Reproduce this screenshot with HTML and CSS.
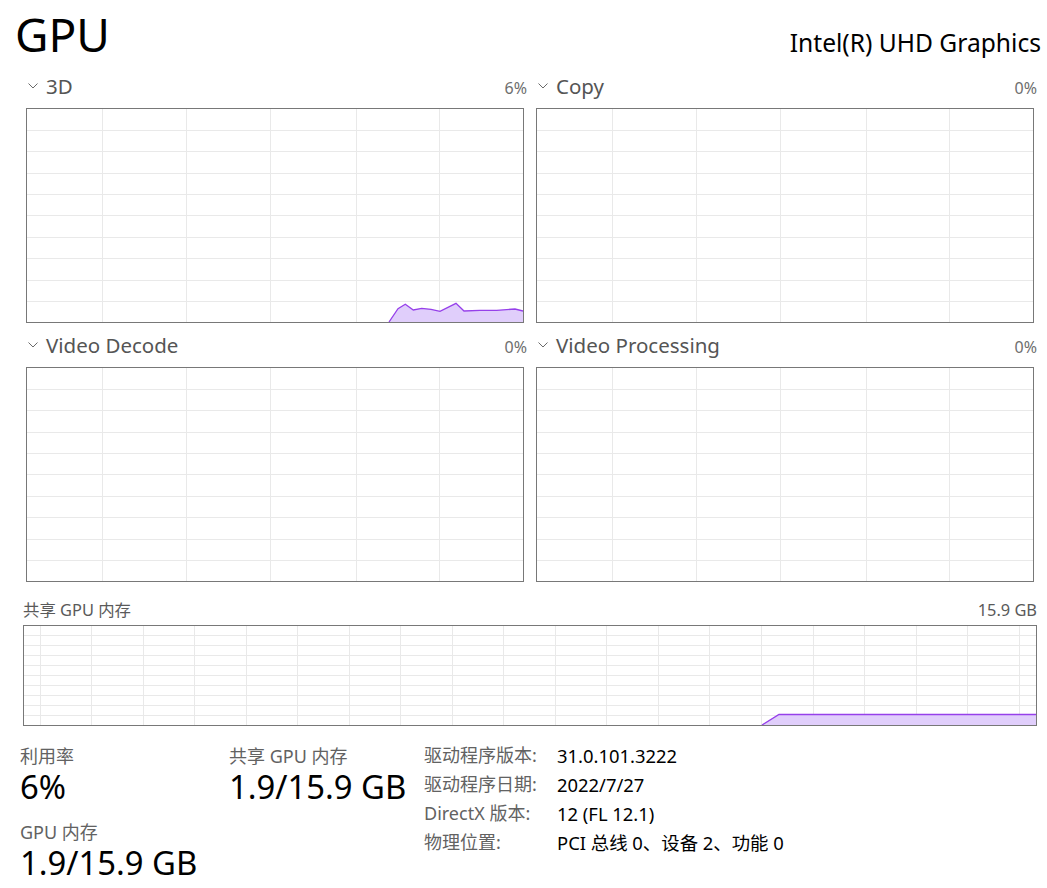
FILE: index.html
```html
<!DOCTYPE html>
<html lang="zh-CN">
<head>
<meta charset="utf-8">
<title>GPU</title>
<link rel="stylesheet" href="styles.css">
</head>
<body>
<div class="page">
  <header class="head">
    <h1 class="title">GPU</h1>
    <div class="device">Intel(R) UHD Graphics</div>
  </header>

  <div class="charts">
    <section class="chart">
      <div class="chart-head">
        <svg class="chev" width="10" height="6" viewBox="0 0 10 6"><polyline points="0.5,0.5 5,5 9.5,0.5"/></svg>
        <span class="chart-name">3D</span>
        <span class="chart-pct">6%</span>
      </div>
      <div class="graph">
        <svg class="plot" width="496" height="213" viewBox="0 0 496 213">
          <path class="grid" d="M0 21.5H496M0 42.5H496M0 64.5H496M0 85.5H496M0 106.5H496M0 128.5H496M0 149.5H496M0 171.5H496M0 192.5H496M75.5 0V213M159.5 0V213M243.5 0V213M329.5 0V213M412.5 0V213"/>
          <polygon class="fill" points="362,213 371,199.7 378.3,195.3 386.3,201 394.7,199.3 404,200.3 413,202.3 429,194.3 437,202 453,201.3 469.7,201.3 488,200 496,202 496,213"/>
          <polyline class="line" points="362,213 371,199.7 378.3,195.3 386.3,201 394.7,199.3 404,200.3 413,202.3 429,194.3 437,202 453,201.3 469.7,201.3 488,200 496,202"/>
        </svg>
      </div>
    </section>

    <section class="chart">
      <div class="chart-head">
        <svg class="chev" width="10" height="6" viewBox="0 0 10 6"><polyline points="0.5,0.5 5,5 9.5,0.5"/></svg>
        <span class="chart-name">Copy</span>
        <span class="chart-pct">0%</span>
      </div>
      <div class="graph">
        <svg class="plot" width="496" height="213" viewBox="0 0 496 213">
          <path class="grid" d="M0 21.5H496M0 42.5H496M0 64.5H496M0 85.5H496M0 106.5H496M0 128.5H496M0 149.5H496M0 171.5H496M0 192.5H496M75.5 0V213M159.5 0V213M243.5 0V213M329.5 0V213M412.5 0V213"/>
        </svg>
      </div>
    </section>

    <section class="chart">
      <div class="chart-head">
        <svg class="chev" width="10" height="6" viewBox="0 0 10 6"><polyline points="0.5,0.5 5,5 9.5,0.5"/></svg>
        <span class="chart-name">Video Decode</span>
        <span class="chart-pct">0%</span>
      </div>
      <div class="graph">
        <svg class="plot" width="496" height="213" viewBox="0 0 496 213">
          <path class="grid" d="M0 21.5H496M0 42.5H496M0 64.5H496M0 85.5H496M0 106.5H496M0 128.5H496M0 149.5H496M0 171.5H496M0 192.5H496M75.5 0V213M159.5 0V213M243.5 0V213M329.5 0V213M412.5 0V213"/>
        </svg>
      </div>
    </section>

    <section class="chart">
      <div class="chart-head">
        <svg class="chev" width="10" height="6" viewBox="0 0 10 6"><polyline points="0.5,0.5 5,5 9.5,0.5"/></svg>
        <span class="chart-name">Video Processing</span>
        <span class="chart-pct">0%</span>
      </div>
      <div class="graph">
        <svg class="plot" width="496" height="213" viewBox="0 0 496 213">
          <path class="grid" d="M0 21.5H496M0 42.5H496M0 64.5H496M0 85.5H496M0 106.5H496M0 128.5H496M0 149.5H496M0 171.5H496M0 192.5H496M75.5 0V213M159.5 0V213M243.5 0V213M329.5 0V213M412.5 0V213"/>
        </svg>
      </div>
    </section>
  </div>

  <section class="shared">
    <div class="shared-head">
      <span>共享 GPU 内存</span>
      <span>15.9 GB</span>
    </div>
    <div class="shared-graph">
      <svg class="plot" width="1012" height="99" viewBox="0 0 1012 99">
        <path class="grid" d="M0 9.5H1012M0 19.5H1012M0 29.5H1012M0 39.5H1012M0 49.5H1012M0 59.5H1012M0 69.5H1012M0 79.5H1012M0 89.5H1012M16.5 0V99M67.5 0V99M119.5 0V99M170.5 0V99M222.5 0V99M273.5 0V99M325.5 0V99M376.5 0V99M428.5 0V99M479.5 0V99M531.5 0V99M582.5 0V99M634.5 0V99M685.5 0V99M737.5 0V99M789.5 0V99M840.5 0V99M892.5 0V99M943.5 0V99M995.5 0V99"/>
        <polygon class="fill" points="738,99 755,88 1012,88 1012,99"/>
        <polyline class="line" points="738,99 755,88.5 1012,88.5"/>
      </svg>
    </div>
  </section>

  <div class="stats">
    <div class="stat-col stat-col-1">
      <div class="stat-label">利用率</div>
      <div class="stat-value">6%</div>
      <div class="stat-label stat-gap">GPU 内存</div>
      <div class="stat-value">1.9/15.9 GB</div>
    </div>
    <div class="stat-col stat-col-2">
      <div class="stat-label">共享 GPU 内存</div>
      <div class="stat-value">1.9/15.9 GB</div>
    </div>
    <dl class="info">
      <dt>驱动程序版本:</dt><dd>31.0.101.3222</dd>
      <dt>驱动程序日期:</dt><dd>2022/7/27</dd>
      <dt>DirectX 版本:</dt><dd>12 (FL 12.1)</dd>
      <dt>物理位置:</dt><dd>PCI 总线 0、设备 2、功能 0</dd>
    </dl>
  </div>
</div>
</body>
</html>
```
FILE: styles.css
```css
html, body {
  margin: 0;
  padding: 0;
  background: #ffffff;
}

body {
  font-family: "Noto Sans", "Noto Sans CJK SC", sans-serif;
  color: #000000;
}

.page {
  width: 1047px;
}

/* header */
.head {
  display: flex;
  align-items: baseline;
  justify-content: space-between;
  padding: 11px 6px 0 15px;
}

.title {
  margin: 0;
  font-size: 46px;
  line-height: 46px;
  font-weight: 400;
}

.device {
  font-size: 24.6px;
  line-height: 30px;
}

/* charts */
.charts {
  display: grid;
  grid-template-columns: 501px 501px;
  column-gap: 9px;
  row-gap: 9px;
  margin-top: 15px;
  padding-left: 26px;
}

.chart-head {
  display: flex;
  align-items: baseline;
  height: 26px;
  line-height: 26px;
  padding-left: 2px;
}

.chev {
  align-self: center;
  margin-right: 8px;
  flex: none;
}

.chev polyline {
  fill: none;
  stroke: #6a6a6a;
  stroke-width: 1;
}

.chart-name {
  font-size: 20.5px;
  color: #555555;
}

.chart-pct {
  margin-left: auto;
  font-size: 16px;
  color: #6e6e6e;
}

.graph {
  margin-top: 9px;
  width: 498px;
  height: 215px;
  border: 1px solid #787878;
  box-sizing: border-box;
}

.plot {
  display: block;
  shape-rendering: crispEdges;
}

.grid {
  fill: none;
  stroke: #e9e9e9;
  stroke-width: 1;
}

.fill {
  fill: #e0cefb;
  stroke: none;
  shape-rendering: geometricPrecision;
}

.line {
  fill: none;
  stroke: #9640ea;
  stroke-width: 1.3;
  shape-rendering: geometricPrecision;
}

/* shared memory */
.shared {
  margin: 18px 0 0 23px;
  width: 1014px;
}

.shared-head {
  display: flex;
  justify-content: space-between;
  height: 20px;
  font-size: 16.4px;
  line-height: 20px;
  color: #5a5a5a;
}

.shared-graph {
  margin-top: 5px;
  height: 101px;
  border: 1px solid #787878;
  box-sizing: border-box;
}

/* stats */
.stats {
  display: flex;
  margin-top: 15px;
  padding-left: 20px;
}

.stat-col {
  padding-top: 4px;
}

.stat-col-1 {
  width: 209px;
}

.stat-col-2 {
  width: 195px;
}

.stat-label {
  height: 24px;
  font-size: 18px;
  line-height: 22px;
  color: #626262;
}

.stat-gap {
  margin-top: 16px;
}

.stat-value {
  height: 36px;
  font-size: 32.8px;
  line-height: 36px;
  color: #000000;
}

.info {
  display: grid;
  grid-template-columns: 133px auto;
  grid-auto-rows: 29px;
  margin: 0;
  font-size: 18.4px;
  line-height: 29px;
}

.info dt {
  font-size: 18px;
  color: #626262;
}

.info dd {
  margin: 0;
  color: #000000;
}
```
